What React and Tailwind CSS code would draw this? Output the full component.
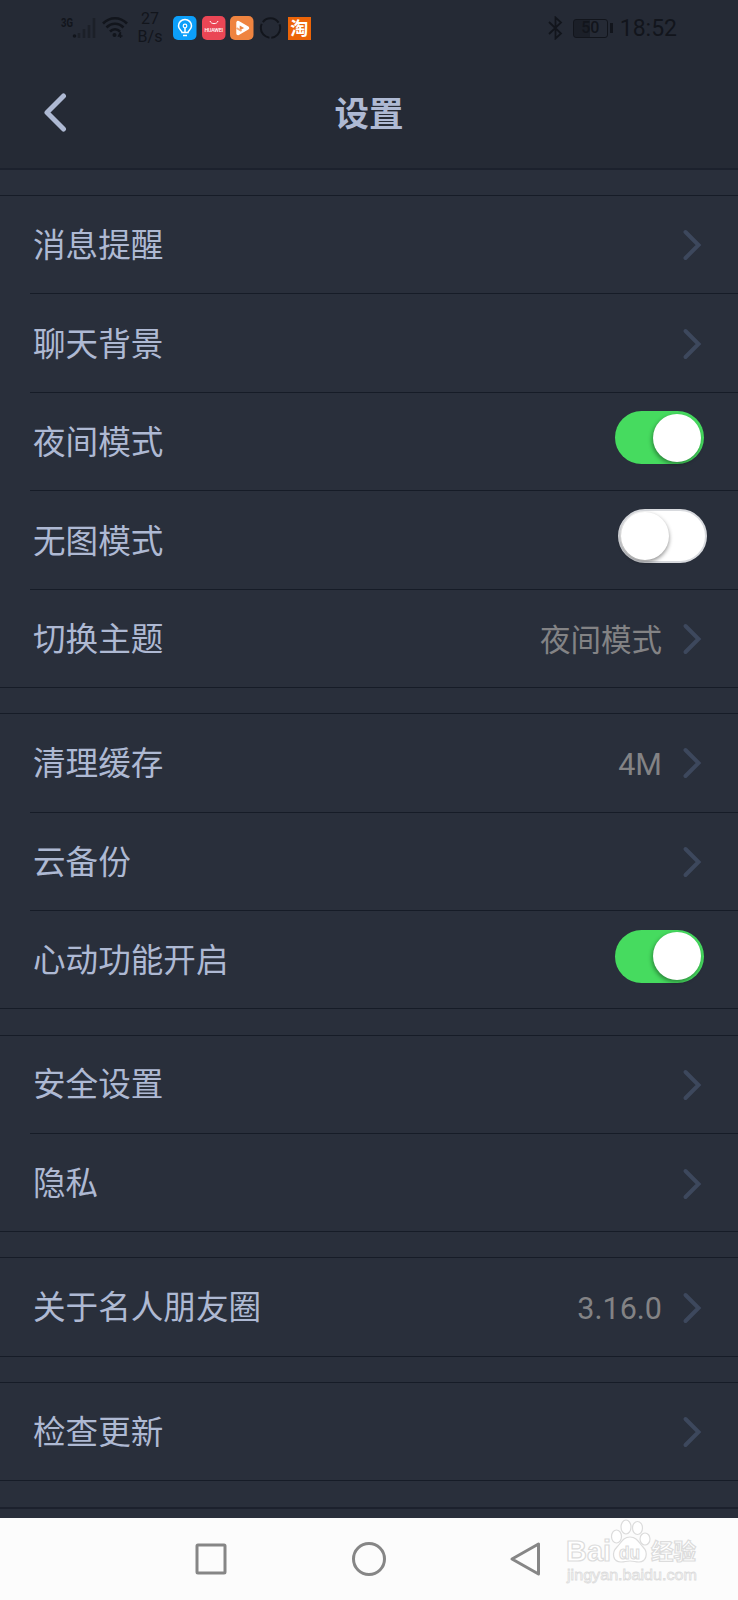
const groups = [
  [
    { label: '消息提醒' },
    { label: '聊天背景' },
    { label: '夜间模式', toggle: 'on' },
    { label: '无图模式', toggle: 'off' },
    { label: '切换主题', value: '夜间模式' },
  ],
  [
    { label: '清理缓存', value: '4M' },
    { label: '云备份' },
    { label: '心动功能开启', toggle: 'on' },
  ],
  [{ label: '安全设置' }, { label: '隐私' }],
  [{ label: '关于名人朋友圈', value: '3.16.0' }],
  [{ label: '检查更新' }],
];

const StatusBar = () => (
  <div className="flex h-14 items-center justify-between pl-[60px] pr-[61px] text-[#12151c]">
    <div className="flex items-center">
      <svg width="36" height="26" viewBox="0 0 36 26">
        <text x="1" y="12" fontSize="12" fontWeight="700" fontFamily="Roboto, sans-serif" fill="currentColor" textLength="12" lengthAdjust="spacingAndGlyphs">3G</text>
        <circle cx="14.5" cy="21" r="1.8" fill="currentColor" />
        <path d="M19 23v-5M24 23v-9M29 23V10M34 23V3" stroke="#1c2028" strokeWidth="2.6" />
      </svg>
      <svg className="ml-1.5" width="26" height="24" viewBox="0 0 26 24" fill="none" stroke="currentColor" strokeWidth="2.6">
        <path d="M1 7.5C8 0.5 18 0.5 25 7.5M4.5 11.5C9.500 6.500 16.500 6.500 21.500 11.500M8 15.500C11 12.500 15 12.500 18 15.500" />
        <circle cx="12.500" cy="19" r="2" fill="currentColor" stroke="none" />
        <path d="M18.500 22v-6l-2 4h4" strokeWidth="1.300" />
      </svg>
      <div className="ml-2 flex w-[28px] flex-col items-center font-[Roboto,sans-serif] text-base leading-[18.5px]">
        <span>27</span>
        <span>B/s</span>
      </div>
      <div className="ml-[9px] flex items-center gap-[4.7px]">
        <svg width="24" height="24" viewBox="0 0 24 24" fill="none">
          <rect width="23.500" height="24" rx="5" fill="#0c9ffa" />
          <path d="M9 16.500c0-2-3.500-3-3.500-6.500a6.500 6.500 0 0 1 13 0c0 3.500-3.500 4.500-3.500 6.500zM10 19.500h4M12 16v-4" stroke="#fff" strokeWidth="1.500" />
          <circle cx="12" cy="10" r="1.800" stroke="#fff" strokeWidth="1.200" />
        </svg>
        <svg width="24" height="24" viewBox="0 0 24 24" fill="none">
          <rect width="23.500" height="24" rx="5" fill="#ea4655" />
          <path d="M8 5c1 3.500 7 3.500 8 0" stroke="#fff" strokeWidth="1" />
          <text x="2.500" y="15.500" fontSize="5.200" fontWeight="500" fontFamily="Roboto, sans-serif" fill="#fff" textLength="18.500">HUAWEI</text>
        </svg>
        <svg width="24" height="24" viewBox="0 0 24 24" fill="none">
          <rect width="23.500" height="24" rx="5" fill="#ef8440" />
          <path d="M8 6.500v11l9.500-5.500z" stroke="#fff" strokeWidth="3.400" strokeLinejoin="round" />
          <path d="M6.500 12l5 3" stroke="#f5a878" strokeWidth="2" />
        </svg>
        <svg width="24" height="24" viewBox="0 0 24 24" fill="none">
          <circle cx="11.500" cy="12" r="9.700" stroke="currentColor" strokeWidth="2" strokeDasharray="18.300 2" strokeDashoffset="4" />
        </svg>
        <div className="flex size-[23px] items-center justify-center bg-[#ec6408] font-['Noto_Sans_CJK_SC',sans-serif] text-[18px] font-bold text-white">
          <span className="-mt-[3px] leading-none">淘</span>
        </div>
      </div>
    </div>
    <div className="flex items-center">
      <svg width="15" height="24" viewBox="0 0 15 24" fill="none" stroke="currentColor" strokeWidth="1.800">
        <path d="M1 6l12 11.500-5.500 5V1.500l5.500 5L1 18" />
      </svg>
      <div className="ml-[10px] flex h-[19px] w-[35px] items-center justify-center rounded-[3px] border border-[#12151c] bg-linear-to-r from-[#1b1f28] from-50% to-transparent to-50% font-[Roboto,sans-serif] text-[16px] font-medium leading-none">50</div>
      <div className="ml-0.5 h-2.5 w-[3px] bg-[#12151c]" />
      <span className="ml-[7px] font-[Roboto,sans-serif] text-[23px] leading-none">18:52</span>
    </div>
  </div>
);

const Chevron = () => (
  <svg className="mr-[36px] mt-0.5 shrink-0" width="20" height="32" viewBox="0 0 20 32" fill="none">
    <path d="M3.500 3l13 13-13 13" stroke="#3d485d" strokeWidth="4" strokeLinecap="round" />
  </svg>
);

const Toggle = ({ on }) =>
  on ? (
    <div className="mr-[34px] mb-[7px] flex h-[53px] w-[89px] items-center justify-end rounded-full bg-[#46db5f] pr-[3px]">
      <div className="size-[48px] rounded-full bg-white shadow-[-1px_2px_4px_rgba(0,0,0,0.4)]" />
    </div>
  ) : (
    <div className="mr-[31px] mb-[7px] flex h-[54px] w-[89px] items-center rounded-full border-2 border-[#d8dade] bg-white pl-px">
      <div className="size-[48px] rounded-full bg-white shadow-[0_2px_4px_rgba(0,0,0,0.45)]" />
    </div>
  );

const Row = ({ item, first }) => (
  <div className="h-[98.4px] pl-[30px]">
    <div className={`flex h-full items-center justify-between pl-[3px] ${first ? '' : 'border-t border-[#161c27]'}`}>
      <span className="mb-0.5 text-[32.6px] leading-none text-[#aeb9d3]">{item.label}</span>
      {item.toggle ? (
        <Toggle on={item.toggle === 'on'} />
      ) : (
        <div className="flex items-center gap-5">
          {item.value && <span className="mt-1.5 font-[Roboto,'Noto_Sans_CJK_SC',sans-serif] text-[30.5px] leading-none text-[#838385]">{item.value}</span>}
          <Chevron />
        </div>
      )}
    </div>
  </div>
);

const NavBar = () => (
  <div className="relative h-[82px] bg-[#fcfcfc]">
    <svg className="block" width="738" height="82" viewBox="0 0 738 82" fill="none" stroke="#868686" strokeWidth="3" strokeLinejoin="round">
      <rect x="197" y="27" width="28" height="28" rx="1" />
      <circle cx="369" cy="41" r="15.500" />
      <path d="M538.500 26v30L512 41z" />
    </svg>
    <svg className="absolute left-[560px] top-0" width="145" height="70" viewBox="0 0 145 70" fill="#fff" stroke="#dcdcdc" strokeWidth="1.200" fontFamily="'Liberation Sans', 'Noto Sans CJK SC', sans-serif">
      <text x="6" y="43" fontSize="29" fontWeight="700" textLength="45" lengthAdjust="spacingAndGlyphs">Bai</text>
      <ellipse cx="56.500" cy="18.500" rx="5" ry="6.500" />
      <ellipse cx="66" cy="9" rx="5" ry="7" />
      <ellipse cx="77.500" cy="10" rx="5" ry="6.500" />
      <ellipse cx="85" cy="21" rx="5" ry="6" />
      <path d="M70 19c7 0 9 6 13 10 6 6 3 15-4 15-4 0-5-1-9-1s-5 1-9 1c-8 0-10-9-4-15 4-4 6-10 13-10z" />
      <text x="59" y="41" fontSize="19" fontWeight="700" textLength="21" lengthAdjust="spacingAndGlyphs">du</text>
      <text x="91" y="41" fontSize="22" fontWeight="700" textLength="45" lengthAdjust="spacingAndGlyphs">经验</text>
      <text x="7" y="61.500" fontSize="15" strokeWidth="0.800" textLength="130" lengthAdjust="spacingAndGlyphs">jingyan.baidu.com</text>
    </svg>
  </div>
);

export default function App() {
  return (
    <div className="flex h-[1600px] w-[738px] flex-col overflow-hidden bg-[#292f3b] font-['Noto_Sans_CJK_SC',sans-serif]">
      <header className="h-[170px] shrink-0 border-b-2 border-[#1c212d] bg-[#252a35]">
        <StatusBar />
        <div className="grid h-[112px] grid-cols-3 items-center">
          <svg className="ml-[42px]" width="28" height="40" viewBox="0 0 28 40" fill="none">
            <path d="M21.500 4L5 20.500l16.500 16.500" stroke="#aeb9d3" strokeWidth="5" strokeLinecap="round" strokeLinejoin="round" />
          </svg>
          <h1 className="-mt-0.5 text-center text-[34.5px] font-bold leading-none text-[#aeb9d3]">设置</h1>
        </div>
      </header>
      <main className="h-[1348px] shrink-0 overflow-hidden pt-[25px]">
        {groups.map((items, i) => (
          <section key={i}>
            <div className="border-t border-[#161c27]">
              <div className="-mt-px">
                {items.map((item, j) => (
                  <Row key={item.label} item={item} first={j === 0} />
                ))}
              </div>
            </div>
            <div className="h-[26.2px] border-t border-[#161c27]" />
          </section>
        ))}
        <div className="border-t-2 border-[#1c212d]" />
      </main>
      <NavBar />
    </div>
  );
}
